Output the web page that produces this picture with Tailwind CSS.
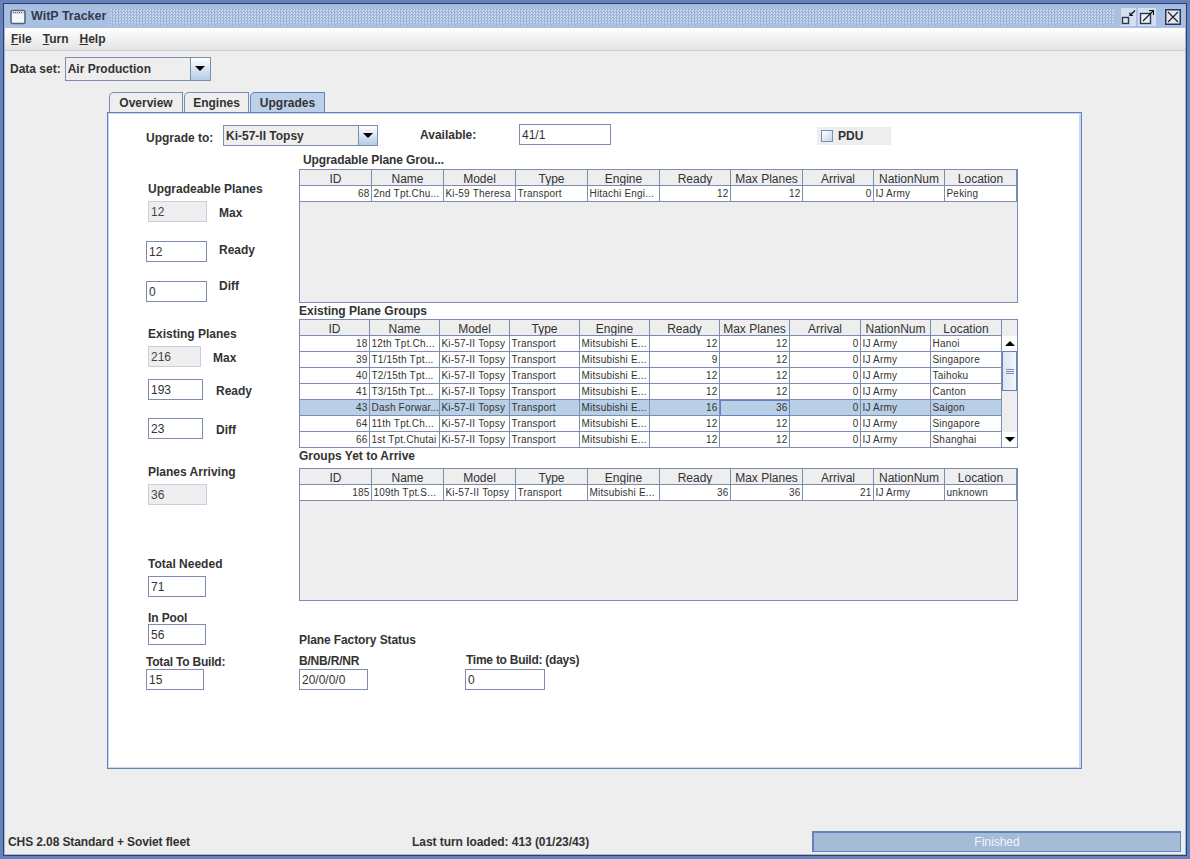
<!DOCTYPE html>
<html>
<head>
<script src="https://cdn.jsdelivr.net/npm/@tailwindcss/browser@4"></script>
</head>
<body class="m-0">
<div class="w-[1190px] h-[859px] overflow-hidden bg-[#eeeeee] border-[3px] border-[#6382bf] font-['Liberation_Sans',Arial,sans-serif] font-bold text-[12px] text-[#333333] flex flex-col">
 <div class="flex-1 min-h-0 border border-[#33415f] flex flex-col">
  <div class="flex-1 min-h-0 border border-[#a3b8d9] flex flex-col">
   <!-- title bar -->
   <div class="h-[23px] bg-[#a9c0e2] flex items-center pl-[5px] pr-[4px] shrink-0">
    <svg class="w-[16px] h-[16px] shrink-0" viewBox="0 0 16 16"><rect x="1" y="1.5" width="14" height="13" rx="1.5" fill="#f4f6fa" stroke="#59627a" stroke-width="1.6"/><rect x="2" y="2.5" width="12" height="2.5" fill="#d5dbe6"/><path d="M3 3.5h1M5 3.5h1M7 3.5h1M9 3.5h1M11 3.5h1" stroke="#59627a" stroke-width="1"/></svg>
    <span class="ml-[5px] text-[12.5px] font-bold text-[#333a4c] leading-none w-[80px] shrink-0">WitP Tracker</span>
    <div class="h-[16px] flex-1 bg-[repeating-conic-gradient(#9ab3d8_0_25%,#c9d8ec_0_50%)] bg-[length:3px_3px]"></div>
    <div class="flex items-center ml-[4px] gap-[2px]">
     <svg class="w-[18px] h-[18px]" viewBox="0 0 18 18"><rect x="3" width="15" height="18" fill="#d3e0f0"/><rect x="4.5" y="9.5" width="6" height="6" fill="#dfe8f4" stroke="#2d3550" stroke-width="1.4"/><path d="M12 7.5l5-5M12 4.5v3h3" stroke="#111" fill="none" stroke-width="1.2"/></svg>
     <svg class="w-[18px] h-[18px]" viewBox="0 0 18 18"><rect width="18" height="18" fill="#d3e0f0"/><rect x="2.5" y="5.5" width="10" height="10" fill="#e9eff7" stroke="#2d3550" stroke-width="1.4"/><path d="M5 13l10-10M11 2.5h4.5V7" stroke="#111" fill="none" stroke-width="1.1"/></svg>
     <svg class="ml-[7px] w-[16px] h-[16px]" viewBox="0 0 16 16"><rect x="0.75" y="0.75" width="14.5" height="14.5" fill="#dfe8f4" stroke="#2d3550" stroke-width="1.5"/><path d="M3 3l10 10M13 3L3 13" stroke="#222" stroke-width="1.2"/></svg>
    </div>
   </div>
   <!-- menu -->
   <div class="h-[23px] shrink-0 bg-gradient-to-b from-white to-[#e4e4e4] border-b border-[#cfcfcf] flex items-center pl-[6px] gap-[11px] text-[#333]">
    <span><u>F</u>ile</span><span><u>T</u>urn</span><span><u>H</u>elp</span>
   </div>
   <!-- data set -->
   <div class="h-[23px] mt-[6px] shrink-0 flex items-center pl-[5px]">
    <span class="font-bold mr-[4px]">Data set:</span>
    <div class="w-[146px] h-[24px] border border-[#7b8eaf] flex bg-[#eeeeee]">
     <span class="flex-1 pl-[2px] flex items-center">Air Production</span>
     <span class="w-[20px] border-l border-[#7b8eaf] bg-gradient-to-b from-white to-[#b5cbe6] flex items-center justify-center"><span class="w-0 h-0 border-x-[5px] border-x-transparent border-t-[5px] border-t-black"></span></span>
    </div>
   </div>
   <!-- tabs -->
   <div class="mt-[12px] ml-[104px] h-[20px] shrink-0 flex gap-[1px] items-stretch">
    <div class="w-[74px] border border-b-0 border-[#7b8eaf] rounded-tl-[5px] bg-[#eeeeee] flex items-center justify-center">Overview</div>
    <div class="w-[65px] border border-b-0 border-[#7b8eaf] rounded-tl-[5px] bg-[#eeeeee] flex items-center justify-center">Engines</div>
    <div class="w-[75px] border border-b-0 border-[#6382bf] rounded-tl-[5px] bg-[#bcd1e8] flex items-center justify-center">Upgrades</div>
   </div>
   <!-- panel -->
   <div class="ml-[102px] w-[975px] h-[657px] shrink-0 border border-[#6382bf] bg-[#c7d7ec] p-[1px] pr-[2px]">
    <div class="w-full h-full bg-white">
     <!-- top row -->
     <div class="flex items-start pt-[10px] pl-[37px] h-[36px]">
      <span class="w-[77px] mt-[7px] leading-[14px]">Upgrade to:</span>
      <div class="w-[155px] h-[21px] mt-[1px] border border-[#7b8eaf] flex bg-[#eeeeee]">
       <span class="flex-1 pl-[2px] flex items-center">Ki-57-II Topsy</span>
       <span class="w-[19px] border-l border-[#7b8eaf] bg-gradient-to-b from-white to-[#b5cbe6] flex items-center justify-center"><span class="w-0 h-0 border-x-[5px] border-x-transparent border-t-[5px] border-t-black"></span></span>
      </div>
      <span class="ml-[42px] w-[99px] mt-[4px] leading-[14px]">Available:</span>
      <div class="w-[92px] h-[21px] border border-[#7b8eaf] bg-white flex items-center pl-[2px] font-normal">41/1</div>
      <div class="ml-[206px] mt-[3px] w-[74px] h-[18px] bg-[#eeeeee] flex items-center pl-[4px]">
       <span class="w-[12px] h-[12px] border border-[#7b8eaf] bg-gradient-to-br from-white to-[#c5d6ea]"></span><span class="ml-[5px]">PDU</span>
      </div>
     </div>
     <!-- body -->
     <div class="flex pl-[37px]">
      <!-- left col -->
      <div class="w-[153px] shrink-0 flex flex-col items-start">
       <div class="mt-[31px] ml-[2px] h-[14px] leading-[16px]">Upgradeable Planes</div>
       <div class="mt-[6px] ml-[2px] flex items-center h-[21px]"><div class="w-[59px] h-[21px] border border-[#c3d0e3] bg-[#eeeeee] flex items-center pl-[2px] font-normal text-[#444]">12</div><span class="ml-[12px] mt-[2px]">Max</span></div>
       <div class="mt-[19px] flex items-start h-[21px]"><div class="w-[61px] h-[21px] border border-[#7b8eaf] bg-white flex items-center pl-[2px] pt-[1px] font-normal">12</div><span class="ml-[12px] leading-[14px] mt-[2px]">Ready</span></div>
       <div class="mt-[19px] flex items-start h-[21px]"><div class="w-[61px] h-[21px] border border-[#7b8eaf] bg-white flex items-center pl-[2px] font-normal">0</div><span class="ml-[12px] leading-[14px] mt-[-2px]">Diff</span></div>
       <div class="mt-[24px] ml-[2px] h-[14px] leading-[16px]">Existing Planes</div>
       <div class="mt-[6px] ml-[2px] flex items-center h-[21px]"><div class="w-[53px] h-[21px] border border-[#c3d0e3] bg-[#eeeeee] flex items-center pl-[2px] font-normal text-[#444]">216</div><span class="ml-[12px] mt-[2px]">Max</span></div>
       <div class="mt-[12px] ml-[2px] flex items-center h-[21px]"><div class="w-[55px] h-[21px] border border-[#7b8eaf] bg-white flex items-center pl-[2px] pt-[1px] font-normal">193</div><span class="ml-[13px] mt-[2px]">Ready</span></div>
       <div class="mt-[18px] ml-[2px] flex items-center h-[21px]"><div class="w-[55px] h-[21px] border border-[#7b8eaf] bg-white flex items-center pl-[2px] font-normal">23</div><span class="ml-[13px] mt-[2px]">Diff</span></div>
       <div class="mt-[25px] ml-[2px] h-[14px] leading-[16px]">Planes Arriving</div>
       <div class="mt-[6px] ml-[2px] w-[59px] h-[21px] border border-[#c3d0e3] bg-[#eeeeee] flex items-center pl-[2px] font-normal text-[#444]">36</div>
       <div class="mt-[51px] ml-[2px] h-[14px] leading-[16px]">Total Needed</div>
       <div class="mt-[6px] ml-[2px] w-[58px] h-[21px] border border-[#7b8eaf] bg-white flex items-center pl-[2px] font-normal">71</div>
       <div class="mt-[13px] ml-[2px] h-[14px] leading-[16px] tracking-[-0.1px]">In Pool</div>
       <div class="ml-[2px] w-[58px] h-[21px] border border-[#7b8eaf] bg-white flex items-center pl-[2px] font-normal">56</div>
       <div class="mt-[9px] h-[14px] leading-[16px] tracking-[-0.2px]">Total To Build:</div>
       <div class="mt-[1px] w-[58px] h-[21px] border border-[#7b8eaf] bg-white flex items-center pl-[2px] font-normal">15</div>
      </div>
      <!-- right col -->
      <div class="w-[719px] shrink-0">
       <div class="h-[19px] pl-[4px] pt-[1px] flex items-center tracking-[-0.1px]">Upgradable Plane Grou...</div>
       <div class="h-[134px] border border-[#7b8eaf] bg-[#eeeeee] text-[#333] overflow-hidden">
        <div class="grid grid-cols-[72px_72px_72px_72px_72px_71px_72px_71px_71px_72px] h-[16px] font-normal leading-[19px] text-center [&>div]:border-r [&>div]:border-b [&>div]:border-[#7b8eaf] [&>div]:overflow-hidden"><div>ID</div><div>Name</div><div>Model</div><div>Type</div><div>Engine</div><div>Ready</div><div>Max Planes</div><div>Arrival</div><div>NationNum</div><div>Location</div></div>
        <div class="grid grid-cols-[72px_72px_72px_72px_72px_71px_72px_71px_71px_72px] h-[16px] bg-white font-normal text-[10px] tracking-[0.2px] leading-[15px] whitespace-nowrap [&>div]:border-r [&>div]:border-b [&>div]:border-[#7b8eaf] [&>div]:px-[1.5px] [&>div]:overflow-hidden"><div class="text-right">68</div><div>2nd Tpt.Chu...</div><div>Ki-59 Theresa</div><div>Transport</div><div>Hitachi Engi...</div><div class="text-right">12</div><div class="text-right">12</div><div class="text-right">0</div><div>IJ Army</div><div>Peking</div></div>
       </div>
       <div class="h-[16px] flex items-center">Existing Plane Groups</div>
       <div class="h-[129px] border border-[#7b8eaf] bg-white flex overflow-hidden">
        <div class="w-[702px] shrink-0">
         <div class="grid grid-cols-[70px_70px_70px_70px_70px_70px_70px_71px_70px_71px] h-[16px] bg-[#eeeeee] font-normal leading-[19px] text-center [&>div]:border-r [&>div]:border-b [&>div]:border-[#7b8eaf] [&>div]:overflow-hidden"><div>ID</div><div>Name</div><div>Model</div><div>Type</div><div>Engine</div><div>Ready</div><div>Max Planes</div><div>Arrival</div><div>NationNum</div><div>Location</div></div>
         <div class="grid grid-cols-[70px_70px_70px_70px_70px_70px_70px_71px_70px_71px] h-[16px] font-normal text-[10px] tracking-[0.2px] leading-[15px] whitespace-nowrap [&>div]:border-r [&>div]:border-b [&>div]:border-[#7b8eaf] [&>div]:px-[1.5px] [&>div]:overflow-hidden"><div class="text-right">18</div><div>12th Tpt.Ch...</div><div>Ki-57-II Topsy</div><div>Transport</div><div>Mitsubishi E...</div><div class="text-right">12</div><div class="text-right">12</div><div class="text-right">0</div><div>IJ Army</div><div>Hanoi</div></div>
         <div class="grid grid-cols-[70px_70px_70px_70px_70px_70px_70px_71px_70px_71px] h-[16px] font-normal text-[10px] tracking-[0.2px] leading-[15px] whitespace-nowrap [&>div]:border-r [&>div]:border-b [&>div]:border-[#7b8eaf] [&>div]:px-[1.5px] [&>div]:overflow-hidden"><div class="text-right">39</div><div>T1/15th Tpt...</div><div>Ki-57-II Topsy</div><div>Transport</div><div>Mitsubishi E...</div><div class="text-right">9</div><div class="text-right">12</div><div class="text-right">0</div><div>IJ Army</div><div>Singapore</div></div>
         <div class="grid grid-cols-[70px_70px_70px_70px_70px_70px_70px_71px_70px_71px] h-[16px] font-normal text-[10px] tracking-[0.2px] leading-[15px] whitespace-nowrap [&>div]:border-r [&>div]:border-b [&>div]:border-[#7b8eaf] [&>div]:px-[1.5px] [&>div]:overflow-hidden"><div class="text-right">40</div><div>T2/15th Tpt...</div><div>Ki-57-II Topsy</div><div>Transport</div><div>Mitsubishi E...</div><div class="text-right">12</div><div class="text-right">12</div><div class="text-right">0</div><div>IJ Army</div><div>Taihoku</div></div>
         <div class="grid grid-cols-[70px_70px_70px_70px_70px_70px_70px_71px_70px_71px] h-[16px] font-normal text-[10px] tracking-[0.2px] leading-[15px] whitespace-nowrap [&>div]:border-r [&>div]:border-b [&>div]:border-[#7b8eaf] [&>div]:px-[1.5px] [&>div]:overflow-hidden"><div class="text-right">41</div><div>T3/15th Tpt...</div><div>Ki-57-II Topsy</div><div>Transport</div><div>Mitsubishi E...</div><div class="text-right">12</div><div class="text-right">12</div><div class="text-right">0</div><div>IJ Army</div><div>Canton</div></div>
         <div class="grid grid-cols-[70px_70px_70px_70px_70px_70px_70px_71px_70px_71px] h-[16px] bg-[#b8cfe5] font-normal text-[10px] tracking-[0.2px] leading-[15px] whitespace-nowrap [&>div]:border-r [&>div]:border-b [&>div]:border-[#7b8eaf] [&>div]:px-[1.5px] [&>div]:overflow-hidden"><div class="text-right">43</div><div>Dash Forwar...</div><div>Ki-57-II Topsy</div><div>Transport</div><div>Mitsubishi E...</div><div class="text-right">16</div><div class="text-right border !border-[#6382bf] leading-[13px]">36</div><div class="text-right">0</div><div>IJ Army</div><div>Saigon</div></div>
         <div class="grid grid-cols-[70px_70px_70px_70px_70px_70px_70px_71px_70px_71px] h-[16px] font-normal text-[10px] tracking-[0.2px] leading-[15px] whitespace-nowrap [&>div]:border-r [&>div]:border-b [&>div]:border-[#7b8eaf] [&>div]:px-[1.5px] [&>div]:overflow-hidden"><div class="text-right">64</div><div>11th Tpt.Ch...</div><div>Ki-57-II Topsy</div><div>Transport</div><div>Mitsubishi E...</div><div class="text-right">12</div><div class="text-right">12</div><div class="text-right">0</div><div>IJ Army</div><div>Singapore</div></div>
         <div class="grid grid-cols-[70px_70px_70px_70px_70px_70px_70px_71px_70px_71px] h-[16px] font-normal text-[10px] tracking-[0.2px] leading-[15px] whitespace-nowrap [&>div]:border-r [&>div]:border-b [&>div]:border-[#7b8eaf] [&>div]:px-[1.5px] [&>div]:overflow-hidden"><div class="text-right">66</div><div>1st Tpt.Chutai</div><div>Ki-57-II Topsy</div><div>Transport</div><div>Mitsubishi E...</div><div class="text-right">12</div><div class="text-right">12</div><div class="text-right">0</div><div>IJ Army</div><div>Shanghai</div></div>
        </div>
        <!-- scrollbar -->
        <div class="flex-1 bg-[#eeeeee] flex flex-col">
         <div class="h-[16px]"></div>
         <div class="h-[15px] bg-white flex items-center justify-center"><span class="w-0 h-0 border-x-[5px] border-x-transparent border-b-[5px] border-b-black"></span></div>
         <div class="h-[40px] border border-[#6382bf] bg-gradient-to-r from-[#dbe6f3] to-[#f4f7fb] flex flex-col items-center justify-center gap-[1px]"><span class="w-[8px] h-px bg-[#7b8eaf]"></span><span class="w-[8px] h-px bg-[#7b8eaf]"></span><span class="w-[8px] h-px bg-[#7b8eaf]"></span></div>
         <div class="flex-1"></div>
         <div class="h-[15px] bg-white flex items-center justify-center"><span class="w-0 h-0 border-x-[5px] border-x-transparent border-t-[5px] border-t-black"></span></div>
        </div>
       </div>
       <div class="h-[20px] pb-[4px] flex items-center">Groups Yet to Arrive</div>
       <div class="h-[133px] border border-[#7b8eaf] bg-[#eeeeee] overflow-hidden">
        <div class="grid grid-cols-[72px_72px_72px_72px_72px_71px_72px_71px_71px_72px] h-[16px] font-normal leading-[19px] text-center [&>div]:border-r [&>div]:border-b [&>div]:border-[#7b8eaf] [&>div]:overflow-hidden"><div>ID</div><div>Name</div><div>Model</div><div>Type</div><div>Engine</div><div>Ready</div><div>Max Planes</div><div>Arrival</div><div>NationNum</div><div>Location</div></div>
        <div class="grid grid-cols-[72px_72px_72px_72px_72px_71px_72px_71px_71px_72px] h-[16px] bg-white font-normal text-[10px] tracking-[0.2px] leading-[15px] whitespace-nowrap [&>div]:border-r [&>div]:border-b [&>div]:border-[#7b8eaf] [&>div]:px-[1.5px] [&>div]:overflow-hidden"><div class="text-right">185</div><div>109th Tpt.S...</div><div>Ki-57-II Topsy</div><div>Transport</div><div>Mitsubishi E...</div><div class="text-right">36</div><div class="text-right">36</div><div class="text-right">21</div><div>IJ Army</div><div>unknown</div></div>
       </div>
       <div class="mt-[32px] leading-[14px] tracking-[-0.1px]">Plane Factory Status</div>
       <div class="flex mt-[7px]">
        <div class="w-[166px] shrink-0">
         <div class="leading-[14px] tracking-[-0.2px]">B/NB/R/NR</div>
         <div class="mt-[1px] w-[69px] h-[21px] border border-[#7b8eaf] bg-white flex items-center pl-[2px] font-normal">20/0/0/0</div>
        </div>
        <div>
         <div class="leading-[14px] ml-[1px] mt-[-1px] tracking-[-0.25px]">Time to Build: (days)</div>
         <div class="mt-[2px] w-[80px] h-[21px] border border-[#7b8eaf] bg-white flex items-center pl-[2px] font-normal">0</div>
        </div>
       </div>
      </div>
     </div>
    </div>
   </div>
   <!-- status -->
   <div class="mt-auto mb-[2px] h-[21px] shrink-0 flex items-center pl-[3px]">
    <span class="w-[404px] shrink-0 tracking-[-0.1px]">CHS 2.08 Standard + Soviet fleet</span>
    <span class="w-[400px] shrink-0 tracking-[-0.05px]">Last turn loaded: 413 (01/23/43)</span>
    <div class="w-[369px] h-[21px] border border-[#6382bf] border-l-2 border-t-2 bg-[#a6bbd6] text-[#f2f5f9] font-normal flex items-center justify-center">Finished</div>
   </div>
  </div>
 </div>
</div>
</body>
</html>
